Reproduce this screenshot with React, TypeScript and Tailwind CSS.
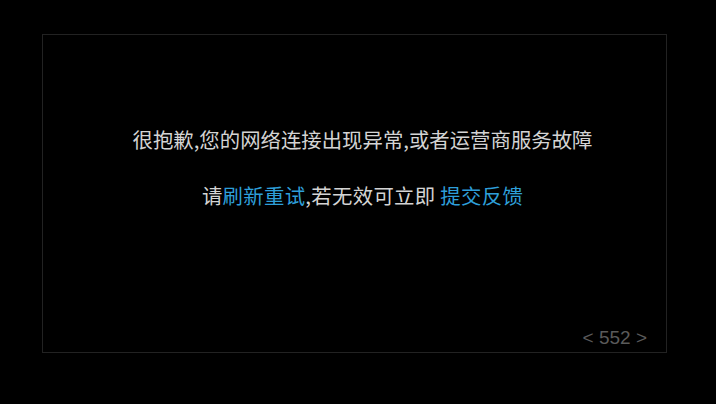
import React from 'react';

const cjk = { fontFamily: '"Noto Sans CJK SC", "Liberation Sans", sans-serif' };

export default function App() {
    return (
        <div className="w-[716px] h-[404px] bg-black pt-[34px] pl-[42px]" style={cjk}>
            <div className="w-[625px] h-[319px] border border-[#222] flex flex-col">
                <div className="mt-[88px] pl-[16px] text-center text-[20.4px] leading-[32px] text-[#d4d4d4]">
                    很抱歉,您的网络连接出现异常,或者运营商服务故障
                </div>
                <div className="mt-[24px] pl-[16px] text-center text-[20.4px] leading-[32px] text-[#d4d4d4] tracking-[0.3px]">
                    请<span className="text-[#2e9fd9] cursor-pointer">刷新重试</span>,若无效可立即 <span className="text-[#2e9fd9] cursor-pointer">提交反馈</span>
                </div>
                <div className="mt-auto mb-[2px] self-end pr-[19px] text-[19px] leading-[24px] text-[#5a5a5a]" style={{ fontFamily: '"Liberation Sans", Arial, sans-serif' }}>
                    &lt; 552 &gt;
                </div>
            </div>
        </div>
    );
}
